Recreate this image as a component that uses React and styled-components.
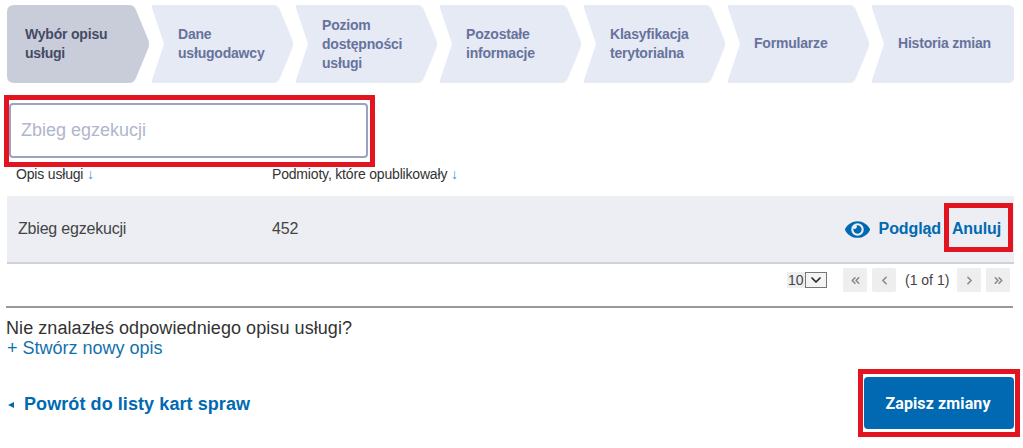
import React from 'react'
import styled, { createGlobalStyle } from 'styled-components'
import { ChevronDown, ChevronLeft, ChevronRight, ChevronsLeft, ChevronsRight } from 'lucide-react'
import { FaEye } from 'react-icons/fa'

const GlobalStyle = createGlobalStyle`
  html, body {
    margin: 0;
    padding: 0;
    background: #fff;
    overflow: hidden;
  }
  body {
    font-family: "Liberation Sans", Arial, sans-serif;
  }
  * { box-sizing: border-box; }
`

const shapes = {
  first: 'M7 0H122Q127 0 129 5L141 34Q143 39 141 44L129 73Q127 78 122 78H7Q0 78 0 71V7Q0 0 7 0Z',
  middle: 'M3 0H122Q127 0 129 5L141 34Q143 39 141 44L129 73Q127 78 122 78H3Q0 78 1 75L13 39L1 3Q0 0 3 0Z',
  last: 'M3 0H137Q143 0 143 6V72Q143 78 137 78H3Q0 78 1 75L13 39L1 3Q0 0 3 0Z',
}

const steps = [
  { label: 'Wybór opisu usługi', shape: 'first', active: true, width: 100 },
  { label: 'Dane usługodawcy', shape: 'middle', width: 100 },
  { label: 'Poziom dostępności usługi', shape: 'middle', width: 90, tall: true },
  { label: 'Pozostałe informacje', shape: 'middle', width: 90 },
  { label: 'Klasyfikacja terytorialna', shape: 'middle', width: 90 },
  { label: 'Formularze', shape: 'middle', width: 90 },
  { label: 'Historia zmian', shape: 'last', width: 110 },
]

function Sort() {
  return <SortArrow>↓</SortArrow>
}

function App() {
  return (
    <Page>
      <GlobalStyle />
      <Steps>
        {steps.map((s) => (
          <Step key={s.label} $shape={s.shape} $active={s.active} $tall={s.tall}>
            <StepLabel $width={s.width}>{s.label}</StepLabel>
          </Step>
        ))}
      </Steps>

      <SearchMark>
        <SearchInput placeholder="Zbieg egzekucji" />
      </SearchMark>

      <TableHead>
        <OpisCol>Opis usługi <Sort /></OpisCol>
        <span>Podmioty, które opublikowały <Sort /></span>
      </TableHead>

      <Row>
        <RowName>Zbieg egzekucji</RowName>
        <RowCount>452</RowCount>
        <RowActions>
          <ActionLink>
            <FaEye size={25} />
            <span>Podgląd</span>
          </ActionLink>
          <CancelMark>Anuluj</CancelMark>
        </RowActions>
      </Row>

      <Pager>
        <PageSize>10</PageSize>
        <PageSelect><ChevronDown size={16} strokeWidth={2.5} /></PageSelect>
        <PagerBtn $first><ChevronsLeft size={13} strokeWidth={3} /></PagerBtn>
        <PagerBtn><ChevronLeft size={13} strokeWidth={3} /></PagerBtn>
        <PagerInfo>(1 of 1)</PagerInfo>
        <PagerBtn $first><ChevronRight size={13} strokeWidth={3} /></PagerBtn>
        <PagerBtn><ChevronsRight size={13} strokeWidth={3} /></PagerBtn>
      </Pager>

      <Divider />

      <Notice>Nie znalazłeś odpowiedniego opisu usługi?</Notice>
      <CreateLink>+ Stwórz nowy opis</CreateLink>

      <Footer>
        <BackLink><BackArrow />Powrót do listy kart spraw</BackLink>
        <SaveMark>
          <SaveButton>Zapisz zmiany</SaveButton>
        </SaveMark>
      </Footer>
    </Page>
  )
}

const Page = styled.div`
  width: 1023px;
  height: 448px;
  overflow: hidden;
`

const Steps = styled.div`
  display: flex;
  gap: 1px;
  margin: 5px 0 0 7px;
  width: 1007px;
`

const Step = styled.div`
  flex: 0 0 143px;
  height: 78px;
  display: flex;
  align-items: center;
  padding-left: ${(p) => (p.$shape === 'first' ? '18px' : '27px')};
  padding-bottom: ${(p) => (p.$tall ? '0' : '1px')};
  background: ${(p) => (p.$active ? '#c9cdd9' : '#e6eaf5')};
  color: ${(p) => (p.$active ? '#444b66' : '#67739c')};
  clip-path: path('${(p) => shapes[p.$shape]}');
`

const StepLabel = styled.div`
  width: ${(p) => p.$width}px;
  font-size: 14px;
  font-weight: 700;
  letter-spacing: -0.2px;
  line-height: 19px;
`

const SearchMark = styled.div`
  width: 371px;
  height: 72px;
  margin: 12px 0 0 4px;
  padding: 3px 2px 4px 0;
  border: 5px solid #e2141f;
`

const SearchInput = styled.input`
  display: block;
  width: 100%;
  height: 100%;
  padding: 0 10px;
  border: 2px solid #9aa3c2;
  border-radius: 4px;
  outline: none;
  background: #fff;
  font-family: inherit;
  font-size: 18px;
  &::placeholder {
    color: #b0b6cd;
    opacity: 1;
  }
`

const TableHead = styled.div`
  display: flex;
  height: 29px;
  padding-left: 16px;
  font-size: 14px;
  letter-spacing: -0.18px;
  line-height: 15px;
  color: #333;
`

const OpisCol = styled.span`
  width: 256px;
`

const SortArrow = styled.span`
  color: #2b8fd6;
  font-weight: 700;
`

const Row = styled.div`
  display: flex;
  align-items: center;
  width: 1007px;
  height: 68px;
  margin-left: 7px;
  padding-left: 11px;
  background: #eceef3;
  border-bottom: 2px solid #cfd2d8;
  font-size: 16px;
  letter-spacing: -0.2px;
  color: #444;
`

const RowName = styled.div`
  width: 254px;
`

const RowCount = styled.div`
  flex: 1;
`

const RowActions = styled.div`
  display: flex;
  align-items: center;
  padding-right: 1px;
  margin-top: -3px;
  gap: 3px;
`

const ActionLink = styled.a`
  display: flex;
  align-items: center;
  gap: 9px;
  margin-top: 3px;
  color: #0069b1;
  font-size: 16px;
  letter-spacing: -0.1px;
  font-weight: 700;
`

const CancelMark = styled.a`
  display: flex;
  align-items: center;
  justify-content: center;
  width: 69px;
  height: 49px;
  padding: 2px 4px 0 0;
  border: 5px solid #e2141f;
  color: #0069b1;
  font-size: 16px;
  letter-spacing: -0.1px;
  font-weight: 700;
`

const Pager = styled.div`
  display: flex;
  align-items: center;
  width: 1007px;
  height: 24px;
  margin: 4px 0 0 7px;
  padding-right: 4px;
  justify-content: flex-end;
  font-size: 14px;
  color: #444;
`

const PageSize = styled.span`
  width: 18px;
  height: 16px;
  padding-left: 1px;
  background: #eee;
  line-height: 16px;
  font-size: 14px;
`

const PageSelect = styled.span`
  display: flex;
  align-items: center;
  justify-content: center;
  width: 22px;
  height: 16px;
  margin-right: 16px;
  border: 1px solid #777;
  color: #222;
  background: #f4f4f4;
`

const PagerBtn = styled.span`
  display: flex;
  align-items: center;
  justify-content: center;
  width: 24px;
  height: 24px;
  margin-right: ${(p) => (p.$first ? '5px' : '6px')};
  background: #eeeeee;
  color: #8a8a8a;
  border-radius: 2px;
  &:last-child { margin-right: 0; }
`

const PagerInfo = styled.span`
  width: 44px;
  margin: 0 8px 0 3px;
  white-space: nowrap;
  text-align: center;
`

const Divider = styled.hr`
  width: 1007px;
  height: 2px;
  margin: 14px 0 0 6px;
  border: 0;
  background: #999;
`

const Notice = styled.div`
  margin: 10px 0 0 6px;
  font-size: 18px;
  letter-spacing: 0.07px;
  line-height: 20px;
  color: #333;
`

const CreateLink = styled.a`
  display: block;
  margin-left: 7px;
  font-size: 18px;
  line-height: 20px;
  color: #1271ad;
`

const Footer = styled.div`
  display: flex;
  align-items: center;
  justify-content: space-between;
  width: 1020px;
  margin: 11px 0 0 0;
  padding-left: 8px;
`

const BackLink = styled.a`
  display: flex;
  align-items: center;
  margin-top: 3px;
  color: #0069b1;
  font-size: 18px;
  letter-spacing: 0.08px;
  font-weight: 700;
`

const BackArrow = styled.span`
  width: 0;
  height: 0;
  margin-right: 10px;
  border-top: 3.5px solid transparent;
  border-bottom: 3.5px solid transparent;
  border-right: 6px solid #0069b1;
`

const SaveMark = styled.div`
  width: 162px;
  height: 68px;
  padding: 3px 1px;
  border: 5px solid #e2141f;
`

const SaveButton = styled.button`
  display: block;
  width: 100%;
  height: 100%;
  padding: 0 2px 0 0;
  border: 0;
  border-radius: 4px;
  background: #0069b1;
  color: #fff;
  font-family: Roboto, sans-serif;
  font-size: 16px;
  letter-spacing: 0.12px;
  font-weight: 700;
`

export default App
